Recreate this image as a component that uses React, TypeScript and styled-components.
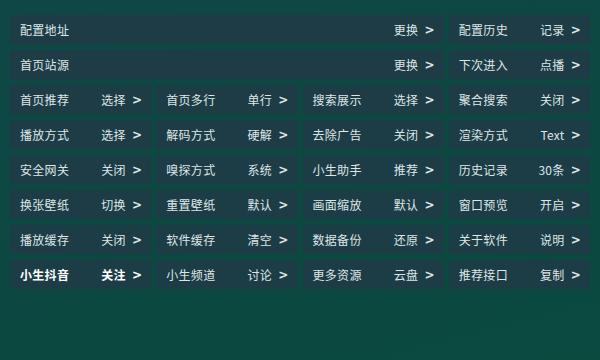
import React from "react";
import styled, { createGlobalStyle } from "styled-components";

const GlobalStyle = createGlobalStyle`
  html, body {
    margin: 0;
    padding: 0;
    width: 600px;
    height: 360px;
    overflow: hidden;
  }
  body {
    font-family: "Noto Sans CJK SC", "Noto Sans", sans-serif;
  }
`;

const Screen = styled.div`
  width: 600px;
  height: 360px;
  box-sizing: border-box;
  padding: 15px 10px;
  background: linear-gradient(165deg, #0f4746 0%, #0c4841 55%, #0a4a3f 100%);
`;

const Grid = styled.div`
  display: grid;
  grid-template-columns: repeat(4, 1fr);
  grid-auto-rows: 29px;
  column-gap: 5px;
  row-gap: 6px;
`;

const Cell = styled.div<{ $span?: number; $strong?: boolean }>`
  grid-column: span ${(p) => p.$span ?? 1};
  display: flex;
  align-items: center;
  justify-content: space-between;
  padding: 0 9px 0 10px;
  background: rgba(30, 60, 70, 0.92);
  border-radius: 3px;
  font-size: 12px;
  color: ${(p) => (p.$strong ? "#ffffff" : "#dfe6e7")};
  font-weight: ${(p) => (p.$strong ? 700 : 400)};
  letter-spacing: 0.3px;
`;

const Label = styled.span`
  white-space: nowrap;
`;

const Value = styled.span`
  white-space: nowrap;
  display: flex;
  align-items: center;
  gap: 6px;
`;

const Arrow = styled.span`
  font-family: "DejaVu Sans", sans-serif;
  font-size: 12px;
  font-weight: 700;
`;

type Item = { label: string; value: string; span?: number; strong?: boolean };

const items: Item[] = [
  { label: "配置地址", value: "更换", span: 3 },
  { label: "配置历史", value: "记录" },
  { label: "首页站源", value: "更换", span: 3 },
  { label: "下次进入", value: "点播" },
  { label: "首页推荐", value: "选择" },
  { label: "首页多行", value: "单行" },
  { label: "搜索展示", value: "选择" },
  { label: "聚合搜索", value: "关闭" },
  { label: "播放方式", value: "选择" },
  { label: "解码方式", value: "硬解" },
  { label: "去除广告", value: "关闭" },
  { label: "渲染方式", value: "Text" },
  { label: "安全网关", value: "关闭" },
  { label: "嗅探方式", value: "系统" },
  { label: "小生助手", value: "推荐" },
  { label: "历史记录", value: "30条" },
  { label: "换张壁纸", value: "切换" },
  { label: "重置壁纸", value: "默认" },
  { label: "画面缩放", value: "默认" },
  { label: "窗口预览", value: "开启" },
  { label: "播放缓存", value: "关闭" },
  { label: "软件缓存", value: "清空" },
  { label: "数据备份", value: "还原" },
  { label: "关于软件", value: "说明" },
  { label: "小生抖音", value: "关注", strong: true },
  { label: "小生频道", value: "讨论" },
  { label: "更多资源", value: "云盘" },
  { label: "推荐接口", value: "复制" },
];

const App = () => {
  return (
    <>
      <GlobalStyle />
      <Screen>
        <Grid>
          {items.map((item, index) => (
            <Cell key={index} $span={item.span} $strong={item.strong}>
              <Label>{item.label}</Label>
              <Value>
                {item.value}
                <Arrow>&gt;</Arrow>
              </Value>
            </Cell>
          ))}
        </Grid>
      </Screen>
    </>
  );
};

export default App;
